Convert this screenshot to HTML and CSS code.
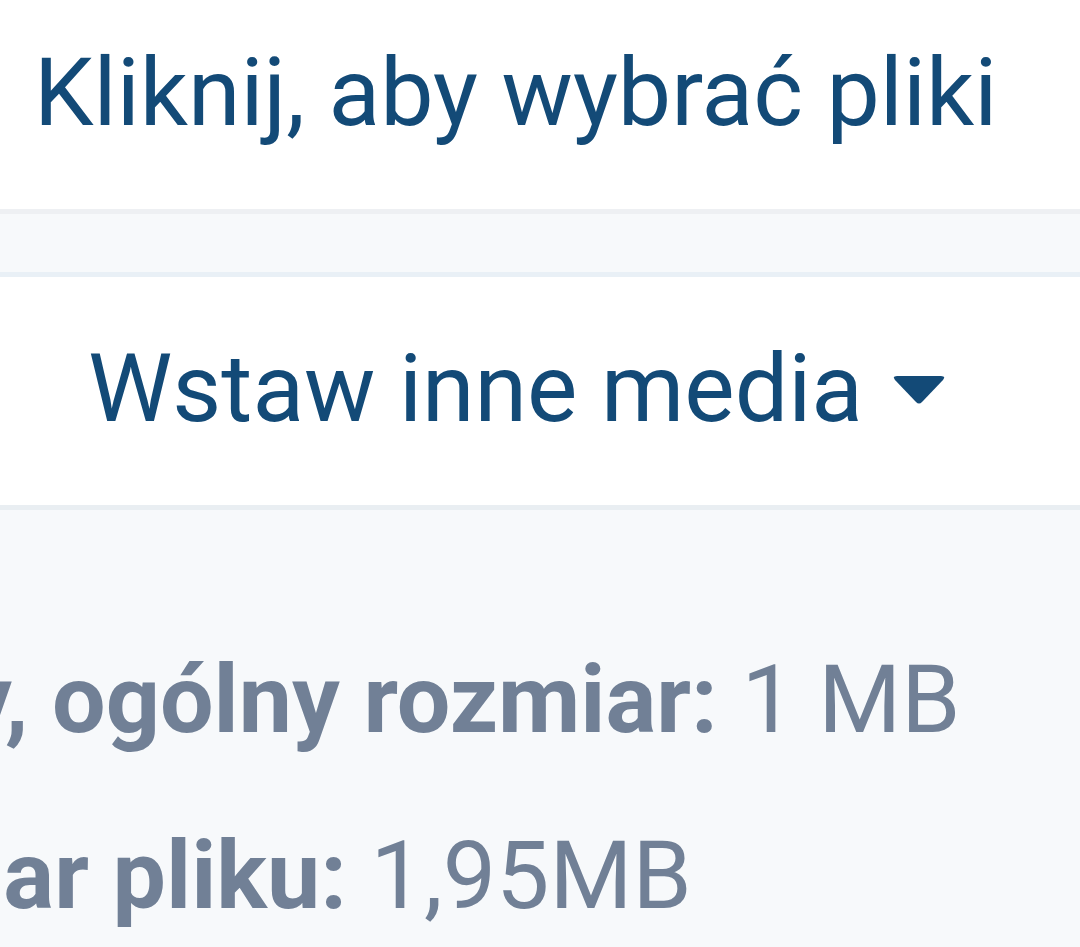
FILE: index.html
```html
<!DOCTYPE html>
<html lang="pl">
<head>
<meta charset="utf-8">
<link rel="stylesheet" href="styles.css">
</head>
<body>
<div class="page">
  <div class="picker">
    <span class="picker-label">Kliknij, aby wybrać pliki</span>
  </div>
  <div class="spacer"></div>
  <div class="media">
    <button class="media-btn">Wstaw inne media<svg class="caret" width="54" height="28" viewBox="0 0 54 28"><path d="M5 0 H49 Q54 0 51 4 L30 26 Q27 29 24 26 L3 4 Q0 0 5 0 Z" fill="#134a77"/></svg></button>
  </div>
  <div class="limits">
    <p class="limit limit-total"><b>Limity, ogólny rozmiar:</b> 1 MB</p>
    <p class="limit limit-file"><b>Maksymalny rozmiar pliku:</b> 1,95MB</p>
  </div>
</div>
</body>
</html>
```
FILE: styles.css
```css
html, body {
  margin: 0;
  padding: 0;
  overflow: hidden;
}
body {
  font-family: Roboto, "Liberation Sans", sans-serif;
  background: #f7f9fb;
  width: 1080px;
  height: 947px;
}
.page {
  display: flex;
  flex-direction: column;
  height: 947px;
}
.picker {
  background: #ffffff;
  height: 172px;
  padding: 37px 0 0 34px;
  border-bottom: 5px solid #eef0f3;
}
.picker-label {
  font-size: 95px;
  line-height: normal;
  color: #134a77;
  white-space: nowrap;
}
.spacer {
  height: 58px;
  background: #f7f9fb;
}
.media {
  background: #ffffff;
  border-top: 5px solid #e9f0f6;
  border-bottom: 5px solid #e9eef2;
  height: 172px;
  padding: 56px 0 0 88px;
}
.media-btn {
  display: flex;
  align-items: center;
  gap: 29px;
  margin: 0;
  padding: 0;
  border: 0;
  background: transparent;
  font-family: Roboto, "Liberation Sans", sans-serif;
  font-size: 95px;
  line-height: normal;
  color: #134a77;
  white-space: nowrap;
}
.caret {
  display: block;
  margin-top: 2px;
}
.limits {
  flex: 1;
  background: #f7f9fb;
  padding-top: 134px;
  color: #718096;
  overflow: hidden;
}
.limit {
  margin: 0;
  font-size: 95px;
  line-height: normal;
  white-space: nowrap;
}
.limit b {
  font-weight: 700;
}
.limit-total {
  margin-left: -252px;
}
.limit-file {
  margin-top: 65px;
  margin-left: -803px;
}
```
